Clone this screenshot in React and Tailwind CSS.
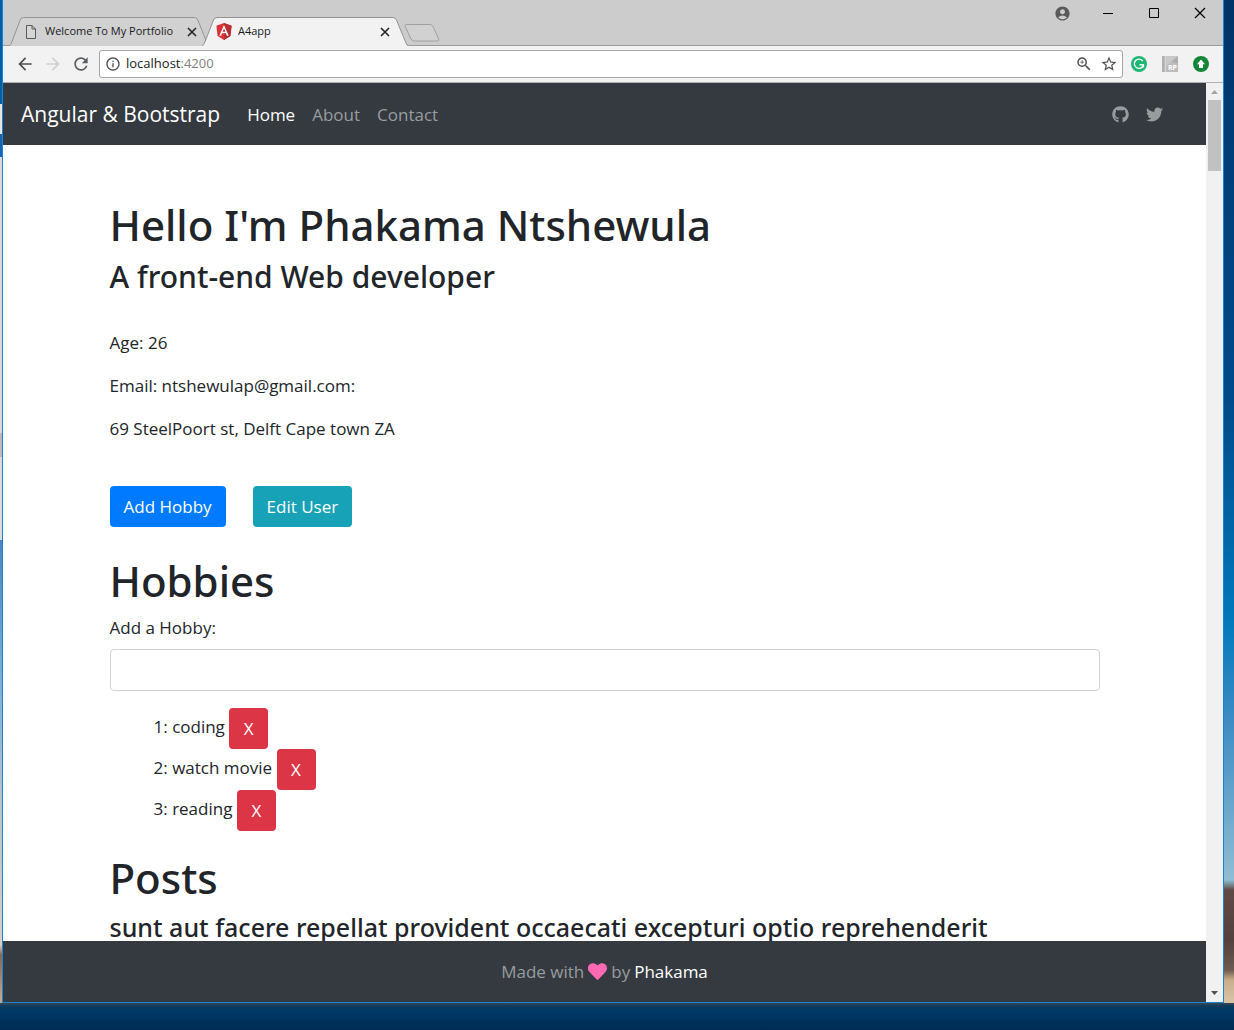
import { useState } from "react";
import { FaGithub, FaTwitter, FaHeart } from "react-icons/fa";
import { MdArrowBack, MdArrowForward, MdRefresh, MdInfoOutline, MdZoomIn, MdStarBorder, MdAccountCircle } from "react-icons/md";

function CloseGlyph() {
  return (
    <svg viewBox="0 0 10 10" className="size-[10px]" fill="none" stroke="currentColor" strokeWidth="1.6" aria-hidden="true">
      <path d="M1 1 9 9M9 1 1 9" />
    </svg>
  );
}

function PageIcon() {
  return (
    <svg viewBox="0 0 12 16" className="h-4 w-3 shrink-0" fill="#d6d6d6" stroke="#5a5a5a" aria-hidden="true">
      <path d="M1.5 1.5h5.5l3.5 3.5v9.500h-9zM7 1.500v3.500h3.500" />
    </svg>
  );
}

function AngularIcon() {
  return (
    <svg viewBox="0 0 16 17" className="h-[17px] w-4 shrink-0" aria-hidden="true">
      <path fill="#dd3136" d="M8 0 .4 2.700 1.600 13 8 17l6.400-4L15.600 2.700z" />
      <path fill="#b52e31" d="M8 0v17l6.400-4L15.600 2.700z" />
      <path fill="#fff" fillRule="evenodd" d="M8 2 3.300 12.700h1.800l.9-2.400h4l.9 2.400h1.800zm0 3.400 1.400 3.400H6.600z" />
    </svg>
  );
}

function Tab({ title, icon, active }) {
  return (
    <div className={active ? "relative z-10 -ml-[7px] flex h-[29px] w-[206px] items-center gap-[6px] pr-[18px] pl-[14px]" : "relative flex h-[29px] w-[200px] items-center gap-2 pr-3 pl-4"}>
      <svg viewBox="0 0 206 29" preserveAspectRatio="none" className="absolute inset-0 size-full" aria-hidden="true">
        <path d="M0 28.500C1.500 28.500 2 27 2.500 26L11.500 3Q12.500.5 15 .5H191Q193.500.5 194.500 3L204 26Q205 28.500 206 28.500V29H0z" fill={active ? "#f2f2f2" : "#d1d1d1"} />
        <path d="M0 28.500C1.500 28.500 2 27 2.500 26L11.500 3Q12.500.5 15 .5H191Q193.500.5 194.500 3L204 26Q205 28.500 206 28.500" fill="none" stroke="#929292" />
      </svg>
      <span className="relative flex">{icon}</span>
      <span className="relative flex-1 truncate text-[11px] text-[#1a1a1a]">{title}</span>
      <button type="button" aria-label={`Close ${title}`} className="relative text-[#222]">
        <CloseGlyph />
      </button>
    </div>
  );
}

function TitleBar() {
  return (
    <div className="flex h-[46px] shrink-0 justify-between border-b border-[#9b9b9b] bg-[#cccccc]">
      <div className="-mb-px flex items-end pl-[6px]">
        <Tab title="Welcome To My Portfolio" icon={<PageIcon />} />
        <Tab title="A4app" icon={<AngularIcon />} active />
        <button type="button" aria-label="New tab" className="-ml-1 self-end pb-1">
          <svg viewBox="0 0 36 18" className="h-[18px] w-9" fill="#d1d1d1" stroke="#a0a0a0" aria-hidden="true">
            <path d="M2.500.5H26Q28 .5 29 2.500L34.500 14.500Q35.500 17 33.500 17H10Q8 17 7 15L1.300 2.500Q.5.500 2.500.5z" />
          </svg>
        </button>
      </div>
      <div className="flex h-[26px] items-center gap-[31px] pr-[17px] text-black">
        <button type="button" aria-label="Profile" className="text-[#5a5a5a]">
          <MdAccountCircle size={17} />
        </button>
        <button type="button" aria-label="Minimize">
          <svg viewBox="0 0 12 12" className="size-3" stroke="currentColor" aria-hidden="true"><path d="M1 6.500h10" /></svg>
        </button>
        <button type="button" aria-label="Maximize" className="pl-[3px]">
          <svg viewBox="0 0 12 12" className="size-3" fill="none" stroke="currentColor" aria-hidden="true"><path d="M1.500 1.500h9v9h-9z" /></svg>
        </button>
        <button type="button" aria-label="Close window" className="pl-[3px]">
          <svg viewBox="0 0 12 12" className="size-3" stroke="currentColor" strokeWidth="1.200" aria-hidden="true"><path d="M1 1 11 11M11 1 1 11" /></svg>
        </button>
      </div>
    </div>
  );
}

function Toolbar() {
  return (
    <div className="flex h-[37px] shrink-0 items-center border-b border-[#b0b0b2] bg-[#f2f2f2] pr-[14px] pl-3">
      <button type="button" aria-label="Back" className="mr-2 text-[#4d4f52]"><MdArrowBack size={20} /></button>
      <button type="button" aria-label="Forward" className="mr-2 text-[#d0d0d2]"><MdArrowForward size={20} /></button>
      <button type="button" aria-label="Reload" className="mr-2 text-[#5a5c5f]"><MdRefresh size={20} /></button>
      <div className="flex h-7 flex-1 items-center rounded-[3px] border border-[#a6a6a6] bg-white pr-1 pl-[5px] text-[#4f4f4f]">
        <MdInfoOutline size={16} className="mr-[5px]" />
        <a href="http://localhost:4200" className="flex-1 text-[13px] text-[#222]">
          localhost<span className="text-[#808080]">:4200</span>
        </a>
        <button type="button" aria-label="Zoom" className="mr-[7px]"><MdZoomIn size={18} /></button>
        <button type="button" aria-label="Bookmark this page"><MdStarBorder size={18} /></button>
      </div>
      <div className="flex items-center gap-[15px] pl-2">
        <button type="button" aria-label="Grammar checker">
          <svg viewBox="0 0 16 16" className="size-4" aria-hidden="true">
            <circle cx="8" cy="8" r="8" fill="#1db673" />
            <path d="M11.800 5.200A4.600 4.600 0 1 0 12.300 9.200M8.500 8.700h3.900v2.800" fill="none" stroke="#fff" strokeWidth="1.400" />
          </svg>
        </button>
        <button type="button" aria-label="RP extension" className="relative size-4 bg-[#bcbcbc]">
          <svg viewBox="0 0 17 17" className="size-full" aria-hidden="true">
            <path fill="#b1b1b1" d="M0 0h3v17H0z" />
            <path fill="#e4e4e4" d="M3 0h1v17H3z" />
            <path fill="#c8c8c8" d="M4 0h13L4 11z" />
            <path fill="#adadad" d="M17 0v8L10 6z" />
          </svg>
          <span className="absolute right-px bottom-0 text-[7px] leading-[8px] font-bold text-white">RP</span>
        </button>
        <button type="button" aria-label="Update extension">
          <svg viewBox="0 0 16 16" className="size-4" aria-hidden="true">
            <circle cx="8" cy="8" r="8" fill="#16843a" />
            <path d="M8 3.500 12 8.200H10V12H6V8.200H4z" fill="#fff" />
          </svg>
        </button>
      </div>
    </div>
  );
}

function Navbar() {
  return (
    <nav className="flex h-[62px] shrink-0 items-center bg-[#343a40] pt-px pr-[43px] pl-[18px] text-[17px] text-[#999c9f]">
      <a href="#home" className="mr-[27px] text-[21px] text-white">Angular &amp; Bootstrap</a>
      <div className="flex flex-1 gap-[17px]">
        <a href="#home" className="text-white">Home</a>
        <a href="#about">About</a>
        <a href="#contact">Contact</a>
      </div>
      <div className="flex gap-[17px]">
        <a href="#github" aria-label="GitHub"><FaGithub size={17} /></a>
        <a href="#twitter" aria-label="Twitter"><FaTwitter size={17} /></a>
      </div>
    </nav>
  );
}

const heading = "font-['Noto_Sans',sans-serif] font-medium";

function Profile() {
  const [hobbies, setHobbies] = useState(["coding", "watch movie", "reading"]);
  const [draft, setDraft] = useState("");
  const add = (e) => {
    e.preventDefault();
    if (draft.trim()) setHobbies([draft.trim(), ...hobbies]);
    setDraft("");
  };
  return (
    <main className="min-h-0 flex-1 overflow-hidden px-4">
      <div className="mx-auto max-w-[990px] pt-[53px] text-[17px] leading-[26px]">
        <h1 className={`${heading} mb-[7px] text-[42px] leading-[53px]`}>Hello I'm Phakama Ntshewula</h1>
        <h2 className={`${heading} mb-[35px] text-[30px] leading-[37px]`}>A front-end Web developer</h2>
        <div className="flex flex-col gap-[17px]">
          <p>Age: 26</p>
          <p>Email: ntshewulap@gmail.com:</p>
          <p>69 SteelPoort st, Delft Cape town ZA</p>
        </div>
        <div className="mt-11 mb-[27px] flex gap-[27px]">
          <button type="button" className="h-[41px] rounded-[4px] bg-[#007bff] px-[14px] text-white">Add Hobby</button>
          <button type="button" className="h-[41px] rounded-[4px] bg-[#17a2b8] px-[14px] text-white">Edit User</button>
        </div>
        <h1 className={`${heading} mb-2 text-[42px] leading-[53px]`}>Hobbies</h1>
        <form onSubmit={add}>
          <label htmlFor="hobby" className="mb-2 block">Add a Hobby:</label>
          <input id="hobby" value={draft} onChange={(e) => setDraft(e.target.value)} className="block h-[42px] w-full rounded-[4px] border border-[#ced4da] px-3 outline-none" />
        </form>
        <ul className="mt-[17px] mb-5 pl-11">
          {hobbies.map((hobby, i) => (
            <li key={hobby}>
              {i + 1}: {hobby}{" "}
              <button type="button" aria-label={`Remove ${hobby}`} onClick={() => setHobbies(hobbies.filter((h) => h !== hobby))} className="h-[41px] w-[39px] rounded-[4px] bg-[#dc3545] align-middle text-white">X</button>
            </li>
          ))}
        </ul>
        <h1 className={`${heading} mb-[7px] text-[42px] leading-[53px]`}>Posts</h1>
        <h3 className={`${heading} text-[25px] leading-8`}>sunt aut facere repellat provident occaecati excepturi optio reprehenderit</h3>
      </div>
    </main>
  );
}

function Scrollbar() {
  return (
    <div className="flex w-[17px] shrink-0 flex-col items-center bg-[#f1f1f1]" aria-hidden="true">
      <svg viewBox="0 0 17 17" className="size-[17px]" fill="#a3a3a3"><path d="M5 11 8.500 7 12 11z" /></svg>
      <div className="h-[71px] w-[13px] bg-[#c1c1c1]" />
      <svg viewBox="0 0 17 17" className="mt-auto size-[17px]" fill="#505050"><path d="M5 6 8.500 10 12 6z" /></svg>
    </div>
  );
}

export default function App() {
  return (
    <div className="flex h-screen flex-col bg-[#003760] font-['Open_Sans',sans-serif] text-[#212529]">
      <div className="flex min-h-0 flex-1">
        <div className="w-[2px] shrink-0 bg-[linear-gradient(#0060a8_0_104px,#e5e5e5_104px_134px,#1665b5_134px_157px,#dadada_157px_433px,#bcbcbc_433px_457px,#dcdcdc_457px_540px,#4a86c0_540px,#7fadd8_680px,#b9c4cc_800px,#d5d0c8_945px,#80685c_955px,#c0a890_1000px)]" />
        <div className="flex min-w-0 flex-1 flex-col border-x border-b border-[#1883d7] bg-white">
          <TitleBar />
          <Toolbar />
          <div className="flex min-h-0 flex-1">
            <div className="flex min-w-0 flex-1 flex-col">
              <Navbar />
              <Profile />
              <footer className="flex h-[61px] shrink-0 items-center justify-center gap-1 bg-[#343a40] text-[17px] text-[#999c9f]">
                Made with <FaHeart size={19} className="text-[#ff69b4]" aria-label="love" /> by <a href="#author" className="text-white">Phakama</a>
              </footer>
            </div>
            <Scrollbar />
          </div>
        </div>
        <div className="w-[10px] shrink-0 bg-[linear-gradient(#003366_0,#003e78_150px,#004a8a_400px,#0079bb_620px,#3d8cc4_720px,#8fbdd3_880px,#5f4a45_890px,#54403d_940px,#6d5a50_970px,#c8ad8a_980px,#d8c2a4_1000px)]" />
      </div>
      <div className="h-[27px] shrink-0 bg-[linear-gradient(#3d4650_0,#0c3c5c_3px,#003a66_8px,#002c54_27px)]" />
    </div>
  );
}
